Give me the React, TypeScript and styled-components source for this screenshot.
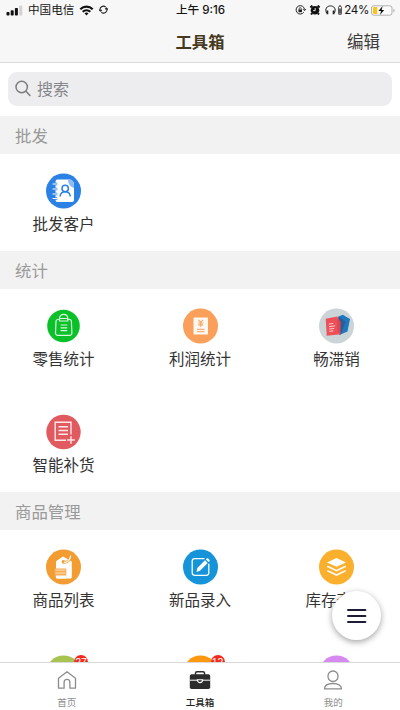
import React from 'react';
import styled, { createGlobalStyle } from 'styled-components';

const Global = createGlobalStyle`
  * { box-sizing: border-box; }
  body { margin: 0; background: #fff; font-family: "Liberation Sans", "Noto Sans CJK SC", sans-serif; }
  svg { display: block; flex: none; }
`;

const Screen = styled.div`
  width: 400px;
  height: 710px;
  display: flex;
  flex-direction: column;
  position: relative;
  overflow: hidden;
  background: #fff;
`;

const Top = styled.header`
  flex: none;
  height: 63px;
  background: #f7f7f7;
  border-bottom: 1px solid #dcdcdc;
`;

const StatusBar = styled.div`
  height: 20px;
  display: grid;
  grid-template-columns: 1fr auto 1fr;
  align-items: center;
  padding: 0 5px 0 6px;
  font: 11.6px/20px Inter, "Noto Sans CJK SC", sans-serif;
  color: #151515;
  white-space: nowrap;
`;

const StatusGroup = styled.div<{ $end?: boolean }>`
  display: flex;
  align-items: center;
  gap: ${(p) => (p.$end ? 2.5 : 5)}px;
  justify-content: ${(p) => (p.$end ? 'flex-end' : 'flex-start')};
`;

const StatusPair = styled.div`
  display: flex;
  align-items: center;
  gap: 2px;
`;

const Clock = styled.span`
  font-weight: 500;
  padding-top: 1px;
  line-height: 19px;
`;

const Carrier = styled.span`
  padding-top: 1px;
  line-height: 19px;
`;

const Percent = styled.span`
  padding-top: 1px;
  line-height: 19px;
  letter-spacing: -0.3px;
`;

const NavBar = styled.div`
  height: 42px;
  display: grid;
  grid-template-columns: 1fr auto 1fr;
  align-items: center;
  padding: 1px 20px 0;
`;

const Title = styled.h1`
  grid-column: 2;
  margin: 0;
  font-size: 16.3px;
  line-height: 24px;
  font-weight: 700;
  color: #463920;
`;

const Edit = styled.span`
  justify-self: end;
  font-size: 16.5px;
  line-height: 24px;
  color: #3c3c3c;
`;

const SearchArea = styled.div`
  flex: none;
  height: 53px;
  padding: 9px 8px 10px;
`;

const SearchBox = styled.div`
  height: 34px;
  border-radius: 9px;
  background: #ededef;
  display: flex;
  align-items: center;
  gap: 6px;
  padding: 0 0 1px 7px;
  font-size: 16px;
  color: #85858a;
`;

const SearchText = styled.span`
  margin-top: -1px;
`;

const Content = styled.main`
  flex: 1;
  min-height: 0;
  overflow: hidden;
`;

const SectionHeader = styled.h2`
  margin: 0;
  height: 38px;
  padding: 1px 0 0 15px;
  background: #f2f2f2;
  color: #999;
  font-size: 16.4px;
  line-height: 38px;
  font-weight: 400;
`;

const Grid = styled.div`
  display: grid;
  grid-template-columns: repeat(3, 136.5px);
  grid-auto-rows: 97px;
  row-gap: 9px;
  justify-content: center;
`;

const Tile = styled.div`
  display: flex;
  flex-direction: column;
  align-items: center;
  padding-top: 19px;
`;

const IconWrap = styled.div`
  position: relative;
  width: 35px;
  height: 36px;
`;

const Label = styled.span`
  margin-top: 4px;
  font-size: 15.5px;
  line-height: 24px;
  color: #333;
  white-space: nowrap;
`;

const Badge = styled.span`
  position: absolute;
  left: 28px;
  top: 0;
  width: 14px;
  height: 14px;
  border-radius: 50%;
  background: #f3291c;
  color: #fff;
  font-size: 10.5px;
  line-height: 15px;
  text-align: center;
`;

const TabBar = styled.nav`
  flex: none;
  height: 48px;
  display: grid;
  grid-template-columns: repeat(3, 133.33px);
  border-top: 1px solid #d9d9d9;
  background: #fff;
`;

const Tab = styled.div<{ $active?: boolean }>`
  display: flex;
  flex-direction: column;
  align-items: center;
  padding-top: 7px;
  font-size: 9.5px;
  line-height: 14px;
  font-weight: ${(p) => (p.$active ? 500 : 400)};
  color: ${(p) => (p.$active ? '#222' : '#8c8c8c')};
`;

const TabLabel = styled.span`
  margin-top: 6px;
`;

const MenuButton = styled.button`
  position: absolute;
  left: 332px;
  top: 591px;
  width: 49px;
  height: 49px;
  border: 0;
  padding: 0;
  border-radius: 50%;
  background: #fff;
  box-shadow: 0 2px 6px rgba(0, 0, 0, 0.36);
  display: grid;
  place-items: center;
`;

/* Round icons are drawn on a 35x36 canvas centred on 18,18. */
const Disc = ({ color, r = 17.5, children }: { color: string; r?: number; children?: React.ReactNode }) => (
  <svg width="35" height="36" viewBox="0.5 0 35 36" fill="none">
    <circle cx="18" cy="18" r={r} fill={color} />
    {children}
  </svg>
);

const Contacts = () => (
  <Disc color="#2c82e4">
    <path d="M12 6.500h11.500a5 5 0 0 1 5 5V27a2 2 0 0 1-2 2H12a2 2 0 0 1-2-2V8.500a2 2 0 0 1 2-2Z" fill="#fff" />
    <path d="M22.500 6.500c0 4.500 2.500 7.500 6 8.500v-3.500a5 5 0 0 0-5-5Z" fill="#8fbdf2" />
    <path d="M7.300 11h4.500M7.300 16h4.500M7.300 21h4.500M7.300 25.500h4.500" stroke="#2c82e4" strokeWidth="2.600" />
    <path d="M7.500 11h4M7.500 16h4M7.500 21h4M7.500 25.500h4" stroke="#fff" strokeWidth="1.200" strokeLinecap="round" />
    <circle cx="19.700" cy="15.500" r="3.200" stroke="#2c82e4" strokeWidth="1.500" />
    <path d="M14.500 23.500c.5-3 2.300-4.700 5.200-4.700s4.700 1.700 5.200 4.700" stroke="#2c82e4" strokeWidth="1.500" />
  </Disc>
);

const Retail = () => (
  <Disc color="#0bc129" r={16.3}>
    <g stroke="#d9f7dc" strokeWidth="1.200" strokeLinecap="round" strokeLinejoin="round">
      <path d="M14 11.500h-1.500a2 2 0 0 0-2 2L10 25a2.300 2.300 0 0 0 2.300 2.400h11.800a2.300 2.300 0 0 0 2.300-2.400l-.5-11.500a2 2 0 0 0-2-2h-1.500" />
      <path d="M14 13v-2.500c0-5.500 8.300-5.500 8.300 0V13ZM14.500 10.500h7.500M15.500 17h5.800M15.500 19.800h5.800M15.500 22.600h5.800" />
    </g>
  </Disc>
);

const Profit = () => (
  <Disc color="#fba05a">
    <rect x="11" y="9.500" width="14.500" height="17" rx=".6" fill="#fff8f0" />
    <path d="m15.800 11.800 2.400 2.500 2.400-2.500M18.200 14.300v4.500M15.700 15h5M15.700 16.900h5" stroke="#f6a665" strokeWidth="1.100" />
    <path d="M14.500 21.300h7.500M14.500 23.600h7.500" stroke="#f6b27b" strokeWidth="1.300" />
  </Disc>
);

const SalesPace = () => (
  <Disc color="#cbd5d7">
    <path d="m20 8.500 4.200-1.800 7.300 4.200-2.500 12.600-8.200 3.500Z" fill="#1f78bd" />
    <path d="m20 8.500 7.200 5.200L22 27l-3-4Z" fill="#2b5d94" />
    <path d="M7.200 10.800 18.700 8.600 22 26.300 8.200 27.700Z" fill="#ed5058" />
    <path d="m18.700 8.600 3.400 5.500L22 26.300l-3-4Z" fill="#dd4550" />
    <path d="m10.300 16.200 4.500-.8M10.500 18.700l6.200-.9M10.700 21.100l5-.7M10.900 23.300l4-.4" stroke="#fbd1d3" strokeWidth="1" />
  </Disc>
);

const Restock = () => (
  <Disc color="#e05a60" r={17.2}>
    <g stroke="#ffe9e8" strokeWidth="1.400">
      <path d="M20.500 26.300H9.700V8.300h15.800v12.300" />
      <path d="M13 12.800h9.500M13 16.500h9.500M13 20.200h9.500M25.500 22.300v7.500M21.700 26h7.600" />
    </g>
  </Disc>
);

const Tag = () => (
  <Disc color="#f39c31">
    <path d="m17.500 7.500 8 4.500a1.500 1.500 0 0 1 .8 1.400V28a1.500 1.500 0 0 1-1.500 1.500H12A1.500 1.500 0 0 1 10.500 28V13a1.500 1.500 0 0 1 .7-1.200Z" fill="#fff" />
    <circle cx="18" cy="12.800" r="1.900" fill="#f39c31" />
    <path d="M18.300 13.100c3 .9 6.300-1.800 6.900-6.500" stroke="#f39c31" strokeWidth="2.600" />
    <path d="M18.300 13.100c3 .9 6.300-1.800 6.900-6.500" stroke="#fff" strokeWidth="1.200" />
    <path d="M9 19.500h11.800v9H9Z" fill="#f6ad55" />
    <path d="M10 21.200h9.800M10 24.200h9.800" stroke="#fbd4a4" strokeWidth="1.200" />
    <path d="M10.500 26.500h10.300v3H12a1.500 1.500 0 0 1-1.500-1.500Z" fill="#fff" />
  </Disc>
);

const Compose = () => (
  <Disc color="#1594d9">
    <path d="M22 9.700H12.200a2.500 2.500 0 0 0-2.500 2.500v11.600a2.500 2.500 0 0 0 2.500 2.500h11.600a2.500 2.500 0 0 0 2.500-2.500v-9" stroke="#fff" strokeWidth="1.300" />
    <path d="m14 23 .8-4 7.700-7.700 2.700 2.700-7.700 7.700Zm9.400-12.600.8-.8a1.100 1.100 0 0 1 1.500 0l1.200 1.200a1.100 1.100 0 0 1 0 1.500l-.8.8Z" fill="#fff" />
  </Disc>
);

const Stock = () => (
  <Disc color="#fbb02d">
    <path d="m18 9 9.500 4.400-9.500 4.400-9.500-4.400Z" fill="#fff" />
    <path d="m8.800 17.300 9.200 4.400 9.200-4.400M8.800 21.600 18 26l9.200-4.400" stroke="#fff" strokeWidth="1.600" />
  </Disc>
);

type Item = { label: string; icon: React.ReactNode; badge?: string };

const sections: { title: string; items: Item[] }[] = [
  { title: '批发', items: [{ label: '批发客户', icon: <Contacts /> }] },
  {
    title: '统计',
    items: [
      { label: '零售统计', icon: <Retail /> },
      { label: '利润统计', icon: <Profit /> },
      { label: '畅滞销', icon: <SalesPace /> },
      { label: '智能补货', icon: <Restock /> },
    ],
  },
  {
    title: '商品管理',
    items: [
      { label: '商品列表', icon: <Tag /> },
      { label: '新品录入', icon: <Compose /> },
      { label: '库存查询', icon: <Stock /> },
      { label: '', icon: <Disc color="#a8c450" />, badge: '27' },
      { label: '', icon: <Disc color="#ff9811" />, badge: '12' },
      { label: '', icon: <Disc color="#d68af0" /> },
    ],
  },
];

const Signal = () => (
  <svg width="17" height="11" viewBox="0 0 17 11" fill="#111">
    <rect x=".5" y="7" width="3" height="3.500" rx=".8" />
    <rect x="4.700" y="5.300" width="3" height="5.200" rx=".8" />
    <rect x="8.900" y="3" width="3" height="7.500" rx=".8" />
    <rect x="13.200" y=".5" width="3" height="10" rx=".8" fill="#d2d2d2" />
  </svg>
);

const Wifi = () => (
  <svg width="15" height="11" viewBox="0 0 14 11" fill="none" stroke="#111" strokeWidth="2.200">
    <path d="M.8 4.200c3.500-3.400 8.900-3.400 12.400 0M3.200 6.800c2.200-2 5.400-2 7.600 0" />
    <path d="m7 10.500-2-2.200c1.200-1 2.800-1 4 0Z" fill="#111" stroke="none" />
  </svg>
);

const Sync = () => (
  <svg width="9" height="11" viewBox="0 0 10 12" fill="none" stroke="#222" strokeWidth="1.200">
    <path d="M1.500 6.200A3.600 3.600 0 0 1 7.400 2.300M8.500 3.800A3.600 3.600 0 0 1 2.600 7.700" />
    <path d="m.2 5 1.300 1.700L3.200 5.500M6.800 4.600l1.700-1.300L9.800 5" />
  </svg>
);

const RotationLock = () => (
  <svg width="11" height="10" viewBox="0 0 11 10" fill="none" stroke="#222">
    <path d="M8.800 7.200A4.200 4.200 0 1 1 9.500 4.500" />
    <path d="m8 4.200 1.500 1.500 1.300-1.700" />
    <rect x="3.400" y="4.500" width="3.600" height="2.700" fill="#222" stroke="none" />
    <path d="M4.200 4.700V3.600c0-1.300 2-1.300 2 0v1.100" strokeWidth=".8" />
  </svg>
);

const Alarm = () => (
  <svg width="14" height="10" viewBox="-1.500 0 14 10">
    <circle cx="5.500" cy="5.300" r="4.300" fill="#111" />
    <path d="m.9 2.500 2-1.900M8.100.6l2 1.900M2.500 8.300l-1 1.200M8.500 8.300l1 1.200" stroke="#111" strokeWidth="2" />
    <path d="M5.700 3v2.600H3.600" fill="none" stroke="#f7f7f7" strokeWidth=".9" />
  </svg>
);

const Headphones = () => (
  <svg width="11" height="10" viewBox="0 0 11 10" fill="none" stroke="#222" strokeWidth="1">
    <path d="M1.600 8C-.6 3.800 2.200.9 5.500.9S11.600 3.800 9.400 8" />
    <path d="M2.400 5.500v3.700M8.600 5.500v3.700" strokeWidth="1.800" />
  </svg>
);

const AccessoryBattery = () => (
  <svg width="4" height="10" viewBox="0 0 4 10" fill="none" stroke="#333" strokeWidth=".8">
    <rect x=".5" y="1.500" width="3" height="8" rx=".7" />
    <path d="M1.200.6h1.600" />
    <path d="M2 3.500v5.200" strokeWidth="1.600" />
  </svg>
);

const Battery = () => (
  <svg width="24" height="11" viewBox="0 0 24 11">
    <rect x=".5" y=".8" width="20.500" height="9.400" rx="2.300" fill="#fbfbfb" stroke="#b1b1b1" />
    <path d="M2 3.300A1.200 1.200 0 0 1 3.200 2.100h3v6.800h-3A1.200 1.200 0 0 1 2 7.700Z" fill="#fbc31e" />
    <path d="m11.700 1-4.300 5h2.700L8.900 10l4.300-5h-2.600Z" fill="#111" />
    <path d="M22.400 3.700c1.600.5 1.600 3.100 0 3.600Z" fill="#b1b1b1" />
  </svg>
);

const SearchIcon = () => (
  <svg width="16" height="17" viewBox="0 0 16 17" fill="none" stroke="#7c7c80" strokeWidth="1.500" strokeLinecap="round">
    <circle cx="6.700" cy="7" r="5.700" />
    <path d="m10.900 11.300 4 4.200" />
  </svg>
);

const Home = () => (
  <svg width="20" height="20" viewBox="0 0 20 20" fill="none" stroke="#8c8c8c" strokeWidth="1.300" strokeLinejoin="round">
    <path d="M1.500 8.200 10 1.700l8.500 6.500v10h-5.600v-6a2.900 2.900 0 0 0-5.800 0v6H1.500Z" />
  </svg>
);

const Briefcase = () => (
  <svg width="22" height="20" viewBox="0 0 22 20">
    <path d="M6.500 5V3.200A1.500 1.500 0 0 1 8 1.700h6a1.500 1.500 0 0 1 1.500 1.500V5" fill="none" stroke="#2c2c2c" strokeWidth="1.500" />
    <rect x=".8" y="4.300" width="20.400" height="14.700" rx="1.800" fill="#2c2c2c" />
    <path d="M.8 10.200h7.500M13.700 10.200h7.500" stroke="#fff" strokeWidth="1" />
    <path d="M8.400 9.800h5.200c0 3.800-5.200 3.800-5.200 0Z" fill="#2c2c2c" stroke="#fff" strokeWidth="1.100" />
  </svg>
);

const Person = () => (
  <svg width="20" height="20" viewBox="0 0 20 20" fill="none" stroke="#8c8c8c" strokeWidth="1.300" strokeLinejoin="round">
    <rect x="5" y="1" width="10" height="10.500" rx="4.900" />
    <path d="M1.500 18.900c0-3 2.800-5.400 8.500-5.400s8.500 2.400 8.500 5.400Z" />
  </svg>
);

export default function App() {
  return (
    <Screen>
      <Global />
      <Top>
        <StatusBar>
          <StatusGroup>
            <Signal />
            <Carrier>中国电信</Carrier>
            <Wifi />
            <Sync />
          </StatusGroup>
          <Clock>上午 9:16</Clock>
          <StatusGroup $end>
            <RotationLock />
            <Alarm />
            <StatusPair>
              <Headphones />
              <AccessoryBattery />
            </StatusPair>
            <StatusPair>
              <Percent>24%</Percent>
              <Battery />
            </StatusPair>
          </StatusGroup>
        </StatusBar>
        <NavBar>
          <Title>工具箱</Title>
          <Edit>编辑</Edit>
        </NavBar>
      </Top>
      <SearchArea>
        <SearchBox>
          <SearchIcon />
          <SearchText>搜索</SearchText>
        </SearchBox>
      </SearchArea>
      <Content>
        {sections.map((section) => (
          <section key={section.title}>
            <SectionHeader>{section.title}</SectionHeader>
            <Grid>
              {section.items.map((item, i) => (
                <Tile key={i}>
                  <IconWrap>
                    {item.icon}
                    {item.badge && <Badge>{item.badge}</Badge>}
                  </IconWrap>
                  <Label>{item.label}</Label>
                </Tile>
              ))}
            </Grid>
          </section>
        ))}
      </Content>
      <TabBar>
        <Tab>
          <Home />
          <TabLabel>首页</TabLabel>
        </Tab>
        <Tab $active>
          <Briefcase />
          <TabLabel>工具箱</TabLabel>
        </Tab>
        <Tab>
          <Person />
          <TabLabel>我的</TabLabel>
        </Tab>
      </TabBar>
      <MenuButton aria-label="菜单">
        <svg width="20" height="16" viewBox="0 0 20 16" stroke="#1d1d35" strokeWidth="1.900" strokeLinecap="round">
          <path d="M1 2h17.400M1 8h17.400M1 14h17.400" />
        </svg>
      </MenuButton>
    </Screen>
  );
}
